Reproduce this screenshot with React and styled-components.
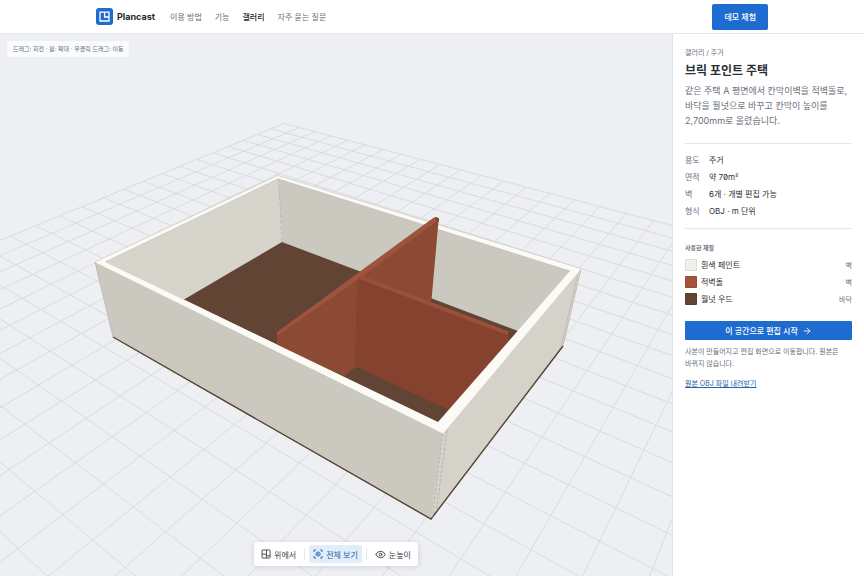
import React from "react";
import styled, { createGlobalStyle, css } from "styled-components";
import { ArrowRight, Eye } from "lucide-react";

const facts = [
  { label: "용도", value: "주거" },
  { label: "면적", value: "약 70m²" },
  { label: "벽", value: "6개 · 개별 편집 가능" },
  { label: "형식", value: "OBJ · m 단위" },
];

const materials = [
  { name: "흰색 페인트", part: "벽", color: "#f1f0ec" },
  { name: "적벽돌", part: "벽", color: "#a4533b" },
  { name: "월넛 우드", part: "바닥", color: "#614434" },
];

// ground cell -> viewport point, used to fit the camera's perspective
const anchors = [
  [-10, 21, 284, 123.5],
  [8, 21, 653.7, 220.7],
  [3, 0, 92.7, 540],
  [10, 6, 550.7, 515.7],
];

const fitGround = (points) => {
  const rows = points.flatMap(([u, v, x, y]) => [
    [u, v, 1, 0, 0, 0, -u * x, -v * x, x],
    [0, 0, 0, u, v, 1, -u * y, -v * y, y],
  ]);
  for (let i = 0; i < 8; i++) {
    let pivot = i;
    for (let r = i + 1; r < 8; r++) {
      if (Math.abs(rows[r][i]) > Math.abs(rows[pivot][i])) pivot = r;
    }
    [rows[i], rows[pivot]] = [rows[pivot], rows[i]];
    rows[i] = rows[i].map((n, _, row) => n / row[i]);
    for (let r = 0; r < 8; r++) {
      if (r === i) continue;
      const k = rows[r][i];
      rows[r] = rows[r].map((n, c) => n - k * rows[i][c]);
    }
  }
  return rows.map((row) => row[8]);
};

const h = fitGround(anchors);

// lines stop just before the camera plane
const groundLine = (from, to) => {
  const depth = ([u, v]) => h[6] * u + h[7] * v + 1;
  const near = 0.15;
  const clip = (a, b) => {
    const da = depth(a);
    if (da >= near) return a;
    const t = (near - da) / (depth(b) - da);
    return [a[0] + (b[0] - a[0]) * t, a[1] + (b[1] - a[1]) * t];
  };
  const project = ([u, v]) => {
    const w = depth([u, v]);
    return [(h[0] * u + h[1] * v + h[2]) / w, (h[3] * u + h[4] * v + h[5]) / w];
  };
  if (depth(from) < near && depth(to) < near) return null;
  return [project(clip(from, to)), project(clip(to, from))];
};

const gridLines = [];
for (let i = -13; i <= 13; i++) {
  gridLines.push(groundLine([3 + i, -5], [3 + i, 21]));
  gridLines.push(groundLine([-10, 8 + i], [16, 8 + i]));
}

const Scene = () => (
  <Canvas
    viewBox="0 34 672 542"
    preserveAspectRatio="xMidYMid slice"
    role="img"
    aria-label="브릭 포인트 주택 3D"
  >
    <g stroke="#dadbdf" strokeWidth="1">
      {gridLines.filter(Boolean).map(([a, b], i) => (
        <line key={i} x1={a[0]} y1={a[1]} x2={b[0]} y2={b[1]} />
      ))}
    </g>

    {/* inside */}
    <polygon points="104,262 278,178 282,243 184,302" fill="#d7d4cc" />
    <polygon points="278,178 573,270 516,333 282,242" fill="#cbc8c0" />
    <polygon points="282,242 518,331 440,424 184,299.5" fill="#614433" />
    <path
      d="M278.5 178L280 203L281.5 242"
      stroke="#b9b5ac"
      strokeWidth="0.8"
      strokeDasharray="4 2"
      fill="none"
    />
    <polygon points="95,262 278,175.5 581,268.5 570,271 278,178.8 105,262" fill="#fbfaf5" />
    <path
      d="M95 262L278 175.5L581 268.5M105 262L278 178.8L570 271"
      stroke="#b9b6ae"
      strokeWidth="0.5"
      fill="none"
    />

    {/* brick partitions */}
    <polygon points="277,334 358,278 438.7,219 431.5,300 357,366 344,376 277,347" fill="#8c4a34" />
    <polygon points="357,278 508,334 508,342 449,410 355,366" fill="#85432f" />
    <polygon points="276.5,332.5 433.5,217.8 436,217 439,218.5 437,220.5 361,277.5 277.5,335.5" fill="#9e533d" />
    <polygon points="357,278 361,275.5 509,331.5 507,335" fill="#9a513b" />
    <polygon points="435.5,217 439,218.5 438.6,222 436,220.5" fill="#7d4032" />

    {/* outside */}
    <polygon points="95,262 443,433 431,519 113,337" fill="#cbc8c0" />
    <polygon points="443,433 581,269 563,346 431,519" fill="#d5d2ca" />
    <path d="M113 337L431 519L563 346" stroke="#54402f" strokeWidth="1.4" fill="none" />
    <path
      d="M442.5 434L432.5 517M447 430L436.5 511"
      stroke="#aeaba2"
      strokeWidth="0.8"
      strokeDasharray="3 1.5"
      fill="none"
    />
    <path
      d="M95 262L113 337M581 269L563 346M577.5 275L561 347"
      stroke="#b5b2a9"
      strokeWidth="0.7"
      fill="none"
    />

    {/* tops of the two near walls */}
    <polygon points="95,262 105,262 438,422 570,271 581,268.5 443,433.5" fill="#fbfaf5" />
  </Canvas>
);

const LogoMark = () => (
  <svg width="17" height="17" viewBox="0 0 17 17" fill="none" aria-hidden="true">
    <rect width="17" height="17" rx="3" fill="#1f6cd0" />
    <path d="M4 4.2H13V13H4Z M8.6 4.2V9H13" stroke="#fff" strokeWidth="1.3" />
  </svg>
);

const PlanIcon = () => (
  <svg width="10" height="10" viewBox="0 0 10 10" fill="none" stroke="currentColor" strokeWidth="0.9" aria-hidden="true">
    <rect x="1" y="1" width="8" height="8" rx="0.5" />
    <path d="M5.4 1V9M1 5.2H5.4M5.4 6.8H9" />
  </svg>
);

const FitIcon = () => (
  <svg width="10" height="10" viewBox="0 0 10 10" fill="none" stroke="currentColor" strokeWidth="0.9" aria-hidden="true">
    <path d="M1 3V1H3M7 1H9V3M9 7V9H7M3 9H1V7" />
    <path d="M5 2.9L7 4V6.1L5 7.2L3 6.1V4Z" />
    <circle cx="5" cy="5" r="0.6" />
  </svg>
);

const App = () => {
  return (
    <>
      <GlobalStyle />
      <Page>
        <Header>
          <HeaderInner>
            <Brand href="#">
              <LogoMark />
              Plancast
            </Brand>
            <Nav>
              <NavLink href="#how">이용 방법</NavLink>
              <NavLink href="#features">기능</NavLink>
              <NavLink href="#gallery" $active>
                갤러리
              </NavLink>
              <NavLink href="#faq">자주 묻는 질문</NavLink>
            </Nav>
            <DemoButton type="button">데모 체험</DemoButton>
          </HeaderInner>
        </Header>
        <Content>
          <Viewer>
            <Scene />
            <Hint>드래그: 회전 · 휠: 확대 · 우클릭 드래그: 이동</Hint>
            <ViewBar>
              <ViewButton type="button">
                <PlanIcon />
                위에서
              </ViewButton>
              <Separator />
              <ViewButton type="button" $active aria-pressed="true">
                <FitIcon />
                전체 보기
              </ViewButton>
              <Separator />
              <ViewButton type="button">
                <Eye size={11} strokeWidth={2} />
                눈높이
              </ViewButton>
            </ViewBar>
          </Viewer>
          <Panel>
            <Crumb>갤러리 / 주거</Crumb>
            <Title>브릭 포인트 주택</Title>
            <Summary>
              같은 주택 A 평면에서 칸막이벽을 적벽돌로, 바닥을 월넛으로 바꾸고
              칸막이 높이를 2,700mm로 올렸습니다.
            </Summary>
            <Facts>
              {facts.map(({ label, value }) => (
                <Fact key={label}>
                  <dt>{label}</dt>
                  <dd>{value}</dd>
                </Fact>
              ))}
            </Facts>
            <SectionLabel>사용한 재질</SectionLabel>
            <Materials>
              {materials.map(({ name, part, color }) => (
                <Material key={name}>
                  <Swatch $color={color} />
                  <span>{name}</span>
                  <small>{part}</small>
                </Material>
              ))}
            </Materials>
            <StartButton type="button">
              이 공간으로 편집 시작
              <ArrowRight size={10} strokeWidth={2} />
            </StartButton>
            <Note>
              사본이 만들어지고 편집 화면으로 이동합니다. 원본은 바뀌지
              않습니다.
            </Note>
            <Download href="#download">원본 OBJ 파일 내려받기</Download>
          </Panel>
        </Content>
      </Page>
    </>
  );
};

export default App;

const GlobalStyle = createGlobalStyle`
  * {
    box-sizing: border-box;
  }
  body {
    margin: 0;
    background: #fff;
    color: #2b3038;
    font-family: Inter, "Noto Sans CJK KR", sans-serif;
    font-size: 8px;
    word-break: keep-all;
  }
  button {
    border: 0;
    padding: 0;
    font: inherit;
    cursor: pointer;
  }
`;
const Page = styled.div`
  min-height: 100vh;
  display: flex;
  flex-direction: column;
`;
const Header = styled.header`
  height: 34px;
  padding: 0 12px;
  background: #fff;
  border-bottom: 1px solid #e4e6ea;
`;
const HeaderInner = styled.div`
  max-width: 672px;
  height: 100%;
  margin: 0 auto;
  display: flex;
  align-items: center;
`;
const Brand = styled.a`
  display: flex;
  align-items: center;
  gap: 4px;
  color: #24282f;
  font-size: 9px;
  font-weight: 700;
  text-decoration: none;
`;
const Nav = styled.nav`
  display: flex;
  gap: 13px;
  margin-left: 15px;
`;
const NavLink = styled.a`
  color: ${({ $active }) => ($active ? "#24282f" : "#69707b")};
  font-weight: ${({ $active }) => ($active ? 500 : 400)};
  line-height: 14px;
  text-decoration: none;
`;
const DemoButton = styled.button`
  height: 26px;
  margin-left: auto;
  padding: 0 12px;
  border-radius: 2px;
  background: #1f6cd0;
  color: #fff;
  font-weight: 500;
`;
const Content = styled.main`
  flex: 1;
  display: flex;
`;
const Viewer = styled.section`
  position: relative;
  flex: 1;
  min-width: 0;
  background: #edeff3;
`;
const Canvas = styled.svg`
  position: absolute;
  inset: 0;
  width: 100%;
  height: 100%;
`;
const Hint = styled.div`
  position: absolute;
  top: 7px;
  left: 7px;
  padding: 0 6px;
  border-radius: 3px;
  background: #fafbfc;
  color: #69707b;
  font-size: 6px;
  line-height: 16px;
`;
const ViewBar = styled.div`
  position: absolute;
  bottom: 10px;
  left: 50%;
  transform: translateX(-50%);
  display: flex;
  align-items: center;
  gap: 4px;
  padding: 3px;
  border-radius: 3px;
  background: #fff;
  box-shadow: 0 1px 5px rgba(30, 40, 60, 0.14);
  white-space: nowrap;
`;
const ViewButton = styled.button`
  display: flex;
  align-items: center;
  gap: 3px;
  height: 18px;
  padding: 0 4px;
  border-radius: 2px;
  background: transparent;
  color: #3c424c;
  ${({ $active }) =>
    $active &&
    css`
      background: #e1edfa;
      color: #2563a8;
    `}
`;
const Separator = styled.span`
  width: 1px;
  height: 12px;
  background: #e4e6ea;
`;
const Panel = styled.aside`
  width: 192px;
  padding: 13px 12px 12px;
  border-left: 1px solid #dfe1e6;
  background: #fff;
`;
const Crumb = styled.p`
  margin: 0;
  color: #69707b;
  font-size: 7px;
  line-height: 12px;
`;
const Title = styled.h1`
  margin: 4px 0;
  font-size: 12px;
  font-weight: 700;
  line-height: 16px;
`;
const Summary = styled.p`
  margin: 0 0 15px;
  color: #69707b;
  font-size: 9px;
  line-height: 15px;
`;
const Facts = styled.dl`
  margin: 0;
  padding: 8px 0;
  border-top: 1px solid #e4e6ea;
  border-bottom: 1px solid #e4e6ea;
`;
const Fact = styled.div`
  display: flex;
  line-height: 17px;
  dt {
    width: 24px;
    color: #69707b;
  }
  dd {
    margin: 0;
    font-feature-settings: "zero";
  }
`;
const SectionLabel = styled.h2`
  margin: 14px 0 3px;
  color: #69707b;
  font-size: 6px;
  font-weight: 700;
  line-height: 10px;
`;
const Materials = styled.ul`
  margin: 0;
  padding: 0;
  list-style: none;
`;
const Material = styled.li`
  display: flex;
  align-items: center;
  gap: 4px;
  height: 17px;
  small {
    margin-left: auto;
    color: #69707b;
    font-size: 7px;
  }
`;
const Swatch = styled.i`
  width: 12px;
  height: 12px;
  border: 1px solid rgba(0, 0, 0, 0.08);
  border-radius: 1px;
  background: ${({ $color }) => $color};
`;
const StartButton = styled.button`
  display: flex;
  align-items: center;
  justify-content: center;
  gap: 4px;
  width: 100%;
  height: 19px;
  margin: 14px 0 6px;
  border-radius: 1px;
  background: #1f6cd0;
  color: #fff;
  font-weight: 500;
`;
const Note = styled.p`
  margin: 0 0 8px;
  color: #69707b;
  font-size: 7px;
  line-height: 12px;
`;
const Download = styled.a`
  color: #2563a8;
  font-size: 7px;
  line-height: 12px;
`;
